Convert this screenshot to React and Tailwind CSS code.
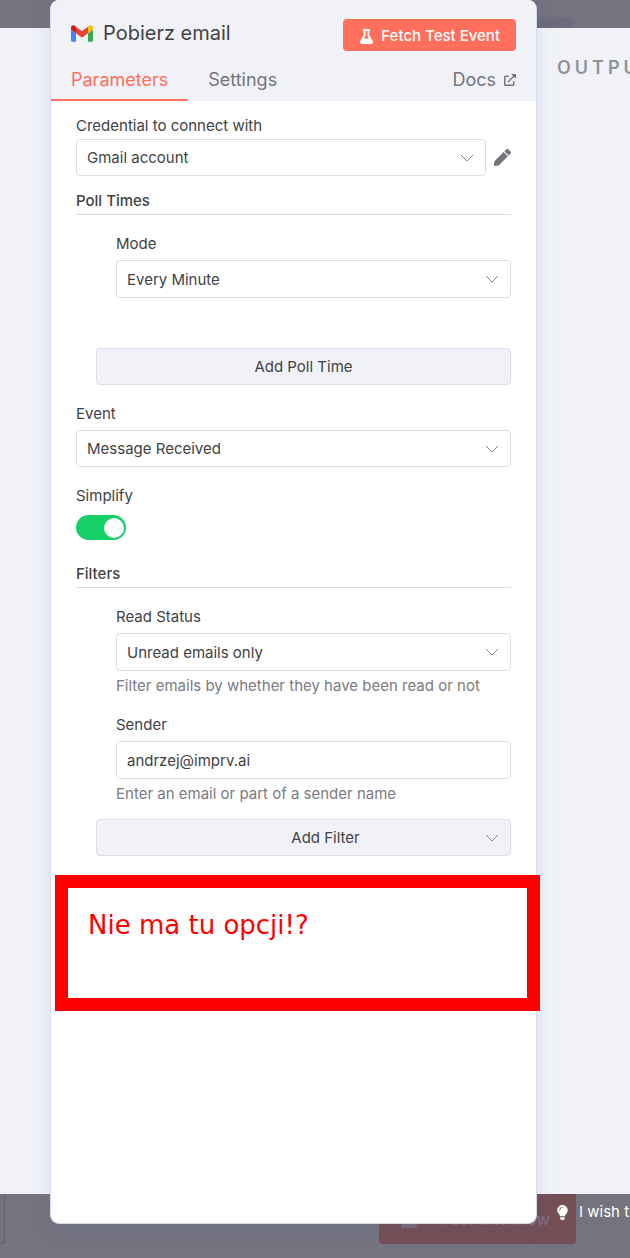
import { FaFlask, FaLightbulb, FaPen } from "react-icons/fa";

function GmailLogo() {
  return (
    <svg viewBox="52 42 88 66" className="h-[17px] w-[22px] shrink-0" aria-hidden="true">
      <path fill="#4285f4" d="M58 108h14V74L52 59v43c0 3.32 2.69 6 6 6" />
      <path fill="#34a853" d="M120 108h14c3.32 0 6-2.69 6-6V59l-20 15" />
      <path fill="#fbbc04" d="M120 48v26l20-15v-8c0-7.42-8.47-11.65-14.4-7.2" />
      <path fill="#ea4335" d="M72 74V48l24 18 24-18v26L96 92" />
      <path fill="#c5221f" d="M52 51v8l20 15V48l-5.6-4.2c-5.94-4.45-14.4-.22-14.4 7.2" />
    </svg>
  );
}

function OpenIcon() {
  return (
    <svg viewBox="0 0 12 12" className="h-3 w-3" fill="none" stroke="currentColor" strokeWidth="1.5" aria-hidden="true">
      <path d="M4.8 2.3H1.6a.8.8 0 0 0-.8.8v7.3c0 .5.4.8.8.8h7.3c.5 0 .8-.3.8-.8V7.2" />
      <path d="M4 8 10.5 1.5" />
      <path fill="currentColor" stroke="none" d="M7.2 0H12v4.8z" />
    </svg>
  );
}

function Chevron() {
  return (
    <svg
      viewBox="0 0 14 8"
      className="pointer-events-none absolute top-1/2 right-3 h-2 w-3.5 -translate-y-1/2 text-[#85868f]"
      fill="none"
      stroke="currentColor"
      strokeWidth="1"
      aria-hidden="true"
    >
      <path d="M1 1l6 6 6-6" />
    </svg>
  );
}

function Label({ htmlFor, children }) {
  return (
    <label htmlFor={htmlFor} className="block leading-5">
      {children}
    </label>
  );
}

function Select({ id, value, size = "h-[37px]" }) {
  return (
    <div className="relative min-w-0 flex-1">
      <select
        id={id}
        defaultValue={value}
        className={`${size} block w-full appearance-none rounded-[4px] border border-[#dbdde9] bg-white pt-0.5 pr-8 pl-2.5`}
      >
        <option>{value}</option>
      </select>
      <Chevron />
    </div>
  );
}

function SectionTitle({ children }) {
  return <h2 className="border-b border-[#d9dbe8] pb-[3px] leading-5 font-medium">{children}</h2>;
}

function Backdrop() {
  return (
    <div className="col-start-1 row-start-1 flex min-w-0 flex-col overflow-hidden">
      <header className="flex h-7 items-end justify-end bg-[#75737f] pr-[57px]">
        <div className="h-[11px] w-20 rounded-tr-[4px] bg-[#6d6c7a]" />
      </header>
      <div className="flex flex-1 justify-end bg-[#f1f2f8] pt-7">
        <h2 className="w-[73px] overflow-hidden text-lg leading-6 font-semibold tracking-[4px] whitespace-nowrap text-[#909298]">
          OUTPUT
        </h2>
      </div>
      <footer className="relative flex h-16 items-start justify-between bg-[#75737f] pr-[54px]">
        <div className="h-[50px] w-[5px] rounded-br-[4px] border-r border-b border-[#62606d]" />
        <button
          type="button"
          className="flex h-[50px] items-center justify-end gap-[23px] rounded-b-[4px] bg-[#754f56] pr-[26px] pl-[21px] text-base font-semibold text-[#7b6c77]"
        >
          <FaFlask className="h-[18px] w-[18px]" />
          Test workflow
        </button>
        <a
          href="#feedback"
          className="absolute top-2 right-0 flex w-[75px] items-center gap-[9px] overflow-hidden leading-5 whitespace-nowrap text-white"
        >
          <FaLightbulb className="h-[15px] w-[15px] shrink-0" />
          I wish this node would...
        </a>
      </footer>
    </div>
  );
}

function PanelHeader() {
  return (
    <header className="rounded-t-[8px] bg-[#f1f2f8]">
      <div className="flex items-start justify-between pt-[19px] pr-5 pl-5">
        <div className="flex h-7 items-center gap-2.5">
          <GmailLogo />
          <h1 className="text-xl leading-7">Pobierz email</h1>
        </div>
        <button
          type="button"
          className="flex h-8 items-center gap-[7px] rounded-[4px] bg-[#ff6f5c] px-4 pt-0.5 font-medium text-white"
        >
          <FaFlask className="h-[15px] w-[15px]" />
          Fetch Test Event
        </button>
      </div>
      <nav className="flex pt-2 text-lg leading-6 text-[#73747c]">
        <button type="button" className="h-[42px] border-b-2 border-[#ff6f5c] px-5 pt-0.5 text-[#ff6f5c]">
          Parameters
        </button>
        <button type="button" className="h-[42px] border-b-2 border-transparent px-5 pt-0.5">
          Settings
        </button>
        <a href="#docs" className="ml-auto flex h-[42px] items-center gap-2 border-b-2 border-transparent px-5 pt-0.5">
          Docs
          <OpenIcon />
        </a>
      </nav>
    </header>
  );
}

export default function App() {
  return (
    <div className="grid min-h-screen grid-cols-1 overflow-hidden font-['Inter',sans-serif] text-[15px] text-[#414244]">
      <Backdrop />
      <main className="z-10 col-start-1 row-start-1 mr-[93px] mb-[34px] ml-[50px] flex flex-col rounded-[9px] border-x border-b border-[#d9dbe8] bg-white shadow-[0_4px_20px_rgba(60,100,180,0.12)]">
        <PanelHeader />
        <form className="px-[25px] pt-[15px]">
          <Label htmlFor="credential">Credential to connect with</Label>
          <div className="mt-[3px] flex items-center gap-2">
            <Select id="credential" value="Gmail account" />
            <button type="button" aria-label="Edit credential" className="text-[#73747c]">
              <FaPen className="h-[17px] w-[17px]" />
            </button>
          </div>

          <section className="mt-[15px]">
            <SectionTitle>Poll Times</SectionTitle>
            <div className="mt-[19px] ml-10 flex flex-col gap-1.5">
              <Label htmlFor="mode">Mode</Label>
              <Select id="mode" value="Every Minute" size="h-[38px]" />
            </div>
            <div className="mt-[50px] ml-5">
              <button
                type="button"
                className="h-[37px] w-full rounded-[4px] border border-[#dbdde9] bg-[#f1f2f8] pt-0.5"
              >
                Add Poll Time
              </button>
            </div>
          </section>

          <div className="mt-[19px] flex flex-col gap-1.5">
            <Label htmlFor="event">Event</Label>
            <Select id="event" value="Message Received" />
          </div>

          <div className="mt-[19px] flex flex-col items-start gap-[9px]">
            <Label htmlFor="simplify">Simplify</Label>
            <input
              id="simplify"
              type="checkbox"
              role="switch"
              defaultChecked
              className="flex h-[25px] w-[50px] appearance-none items-center rounded-full bg-[#c5c7d3] px-0.5 before:h-5 before:w-5 before:rounded-full before:bg-white checked:justify-end checked:bg-[#15d067]"
            />
          </div>

          <section className="mt-6">
            <SectionTitle>Filters</SectionTitle>
            <div className="mt-[19px] ml-10 flex flex-col gap-[19px]">
              <div className="flex flex-col gap-1.5">
                <Label htmlFor="read-status">Read Status</Label>
                <div className="flex flex-col gap-[5px]">
                  <Select id="read-status" value="Unread emails only" size="h-[38px]" />
                  <p className="leading-5 text-[#7a7b83]">Filter emails by whether they have been read or not</p>
                </div>
              </div>
              <div className="flex flex-col gap-1.5">
                <Label htmlFor="sender">Sender</Label>
                <div className="flex flex-col gap-[5px]">
                  <input
                    id="sender"
                    type="text"
                    defaultValue="andrzej@imprv.ai"
                    className="h-[38px] w-full rounded-[4px] border border-[#dbdde9] bg-white px-2.5"
                  />
                  <p className="leading-5 text-[#7a7b83]">Enter an email or part of a sender name</p>
                </div>
              </div>
            </div>
            <div className="relative mt-[15px] ml-5">
              <button
                type="button"
                className="h-[37px] w-full rounded-[4px] border border-[#dbdde9] bg-[#f1f2f8] pt-0.5 pl-11"
              >
                Add Filter
              </button>
              <Chevron />
            </div>
          </section>
        </form>

        <div className="mt-[19px] -mr-1 ml-1 h-[136px] border-[13px] border-[#ff0000] px-5 pt-[19px] font-['DejaVu_Sans',sans-serif] text-[26px] leading-9 text-[#ff0000]">
          Nie ma tu opcji!?
        </div>
      </main>
    </div>
  );
}
